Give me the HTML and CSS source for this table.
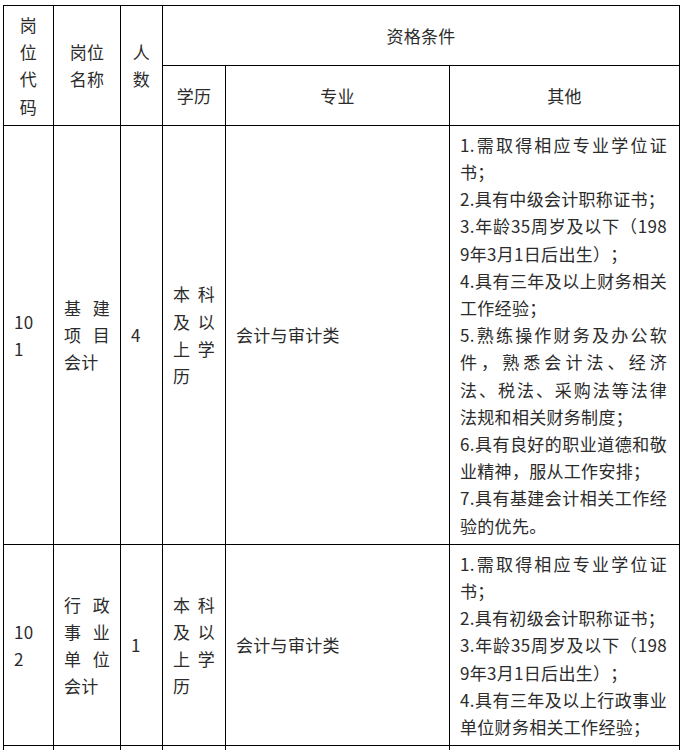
FILE: index.html
```html
<!DOCTYPE html>
<html lang="zh-CN">
<head>
<meta charset="utf-8">
<title>岗位资格条件</title>
<link rel="stylesheet" href="styles.css">
</head>
<body>
<table class="jobs">
  <colgroup>
    <col class="c-code">
    <col class="c-name">
    <col class="c-num">
    <col class="c-edu">
    <col class="c-major">
    <col class="c-other">
  </colgroup>
  <thead>
    <tr>
      <th rowspan="2">岗位代码</th>
      <th rowspan="2">岗位名称</th>
      <th rowspan="2">人数</th>
      <th colspan="3">资格条件</th>
    </tr>
    <tr>
      <th>学历</th>
      <th>专业</th>
      <th>其他</th>
    </tr>
  </thead>
  <tbody>
    <tr>
      <td class="left code">101</td>
      <td class="just">基建项目会计</td>
      <td class="left">4</td>
      <td class="just">本科及以上学历</td>
      <td class="left">会计与审计类</td>
      <td class="just other">1.需取得相应专业学位证书；<br>2.具有中级会计职称证书；<br>3.年龄35周岁及以下（1989年3月1日后出生）；<br>4.具有三年及以上财务相关工作经验；<br>5.熟练操作财务及办公软件，熟悉会计法、经济法、税法、采购法等法律法规和相关财务制度；<br>6.具有良好的职业道德和敬业精神，服从工作安排；<br>7.具有基建会计相关工作经验的优先。</td>
    </tr>
    <tr>
      <td class="left code">102</td>
      <td class="just">行政事业单位会计</td>
      <td class="left">1</td>
      <td class="just">本科及以上学历</td>
      <td class="left">会计与审计类</td>
      <td class="just other">1.需取得相应专业学位证书；<br>2.具有初级会计职称证书；<br>3.年龄35周岁及以下（1989年3月1日后出生）；<br>4.具有三年及以上行政事业单位财务相关工作经验；</td>
    </tr>
    <tr>
      <td class="left code">&nbsp;</td>
      <td class="just">&nbsp;</td>
      <td class="left">&nbsp;</td>
      <td class="just">&nbsp;</td>
      <td class="left">&nbsp;</td>
      <td class="just other">&nbsp;</td>
    </tr>
  </tbody>
</table>
</body>
</html>
```

FILE: styles.css
```css
html, body {
  margin: 0;
  padding: 0;
  background: #fff;
}

body {
  padding: 5px 0 0 3px;
  font-family: "Noto Sans CJK SC", "Noto Sans", sans-serif;
  font-size: 17px;
  line-height: 27.2px;
  letter-spacing: 0.3px;
  color: #2b2b2b;
  text-spacing-trim: space-all;
}

.jobs {
  border-collapse: collapse;
  table-layout: fixed;
  width: 676px;
}

.c-code { width: 50px; }
.c-name { width: 67px; }
.c-num { width: 42px; }
.c-edu { width: 63px; }
.c-major { width: 224px; }
.c-other { width: 230px; }

.jobs th,
.jobs td {
  border: 1px solid #000;
  padding: 5px 10px;
  vertical-align: middle;
  word-break: break-all;
}

.jobs th {
  font-weight: normal;
  text-align: center;
}

.jobs td.left {
  text-align: left;
}

.jobs td.just {
  text-align: justify;
}

.jobs td.code {
  padding-right: 11px;
}

.jobs td.other {
  padding-right: 12px;
}
```
